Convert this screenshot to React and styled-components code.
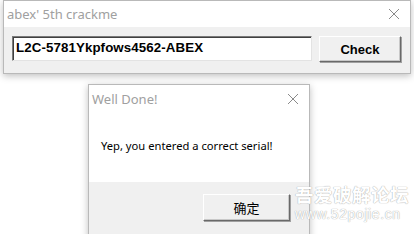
import React from 'react';
import styled, { createGlobalStyle } from 'styled-components';

const GlobalStyle = createGlobalStyle`
  html, body {
    margin: 0;
    padding: 0;
    background: #ffffff;
    width: 414px;
    height: 234px;
    overflow: hidden;
  }
  #root {
    width: 414px;
    height: 234px;
  }
`

const Desktop = styled.div`
  position: relative;
  width: 414px;
  height: 234px;
  overflow: hidden;
  background: #ffffff;
  font-family: "Noto Sans", "Noto Sans CJK SC", sans-serif;
`

const Window = styled.div`
  position: absolute;
  left: ${p => p.x}px;
  top: ${p => p.y}px;
  width: ${p => p.w}px;
  height: ${p => p.h}px;
  box-sizing: border-box;
  border: 1px solid #b9b9b9;
  background: #f0f0f0;
  display: flex;
  flex-direction: column;
  box-shadow: 0 2px 7px rgba(0,0,0,.25);
`

const TitleBar = styled.div`
  height: ${p => p.h}px;
  flex: none;
  background: #ffffff;
  display: flex;
  align-items: center;
  justify-content: space-between;
  padding: 0 10px 0 ${p => p.pl}px;
  color: #a0a0a0;
  font-size: 13px;
`

const CloseIcon = () => (
  <svg width="12" height="12" viewBox="0 0 12 12">
    <path d="M1 1 L11 11 M11 1 L1 11" stroke="#8a8a8a" strokeWidth="1" fill="none" />
  </svg>
)

const Client = styled.div`
  flex: 1;
  display: flex;
  align-items: flex-start;
  gap: 7px;
  padding: 9px 0 0 8px;
`

const SerialInput = styled.div`
  width: 300px;
  height: 25px;
  box-sizing: border-box;
  background: #ffffff;
  border: 1px solid #7a7a7a;
  border-right-color: #e3e3e3;
  border-bottom-color: #e3e3e3;
  box-shadow: inset 1px 1px 0 #404040;
  font-family: "Liberation Sans", Arial, sans-serif;
  font-weight: bold;
  font-size: 13.3px;
  color: #000;
  padding: 3px 0 0 3px;
  letter-spacing: 0.1px;
`

const WinButton = styled.div`
  width: ${p => p.w}px;
  height: ${p => p.h}px;
  box-sizing: border-box;
  background: #f0f0f0;
  border: 1px solid #ffffff;
  border-right-color: #696969;
  border-bottom-color: #696969;
  box-shadow: 1px 1px 0 #a0a0a0, inset -1px -1px 0 #c8c8c8;
  display: flex;
  align-items: center;
  justify-content: center;
  color: #000;
  font-family: ${p => p.cjk ? '"Noto Sans CJK SC", sans-serif' : '"Liberation Sans", Arial, sans-serif'};
  font-weight: ${p => p.cjk ? 'normal' : 'bold'};
  font-size: 13px;
`

const DialogBody = styled.div`
  height: 69px;
  flex: none;
  background: #ffffff;
  padding: 25px 0 0 12px;
  box-sizing: border-box;
  font-size: 11.2px;
  color: #000;
`

const DialogFooter = styled.div`
  flex: 1;
  display: flex;
  justify-content: flex-end;
  align-items: flex-start;
  padding: 12px 19px 0 0;
`

const Watermark = styled.div`
  position: absolute;
  left: 295px;
  top: 185px;
  color: #ffffff;
  font-family: "Noto Sans CJK SC", sans-serif;
  text-shadow: 0 0 1px #a8a8a8, 0 0 1px #c0c0c0;
  line-height: 1;
`

const WatermarkTitle = styled.div`
  font-size: 18.5px;
  font-weight: bold;
  letter-spacing: 0.5px;
`

const WatermarkUrl = styled.div`
  margin-top: 3px;
  font-size: 14px;
  font-family: "Liberation Sans", Arial, sans-serif;
  letter-spacing: 0.6px;
`

export default function App() {
  return (
    <Desktop>
      <GlobalStyle />
      <Window x={3} y={0} w={408} h={74}>
        <TitleBar h={26} pl={3}>
          <span>abex' 5th crackme</span>
          <CloseIcon />
        </TitleBar>
        <Client>
          <SerialInput>L2C-5781Ykpfows4562-ABEX</SerialInput>
          <WinButton w={82} h={26}>Check</WinButton>
        </Client>
      </Window>
      <Window x={88} y={84} w={222} h={160}>
        <TitleBar h={28} pl={3}>
          <span>Well Done!</span>
          <CloseIcon />
        </TitleBar>
        <DialogBody>Yep, you entered a correct serial!</DialogBody>
        <DialogFooter>
          <WinButton w={87} h={27} cjk>确定</WinButton>
        </DialogFooter>
      </Window>
      <Watermark>
        <WatermarkTitle>吾爱破解论坛</WatermarkTitle>
        <WatermarkUrl>www.52pojie.cn</WatermarkUrl>
      </Watermark>
    </Desktop>
  );
}
